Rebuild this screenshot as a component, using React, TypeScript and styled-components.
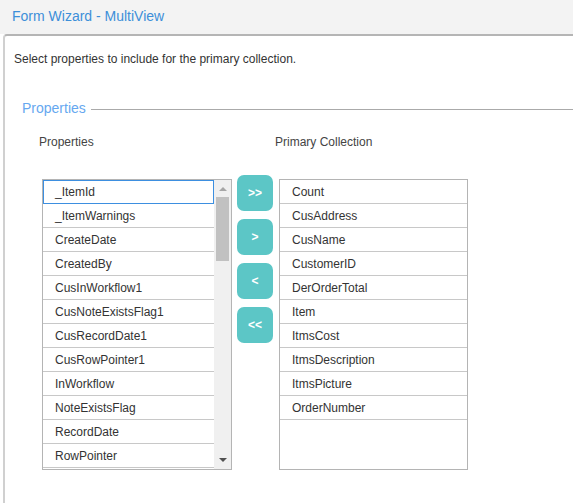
import React, { useState } from "react";
import styled, { createGlobalStyle } from "styled-components";

const GlobalStyle = createGlobalStyle`
  html, body {
    margin: 0;
    padding: 0;
    background: #ffffff;
    overflow: hidden;
  }
  body {
    font-family: "Liberation Sans", Arial, sans-serif;
    color: #333;
  }
`;

const sourceItems = [
  "_ItemId",
  "_ItemWarnings",
  "CreateDate",
  "CreatedBy",
  "CusInWorkflow1",
  "CusNoteExistsFlag1",
  "CusRecordDate1",
  "CusRowPointer1",
  "InWorkflow",
  "NoteExistsFlag",
  "RecordDate",
  "RowPointer",
  "UpdatedBy",
  "CoNum",
  "CoLine",
  "CoRelease",
  "CustNum",
  "CustSeq",
  "CusCity",
  "CusState",
  "CusZip",
  "CusCountry",
  "CusPhone",
  "CusEmail",
  "CusContact",
  "CusTerritory",
  "DerDueDate",
  "DerOrderDate",
  "DerShipDate",
  "DerStatus",
  "DueDate",
  "Item",
  "ItmsUM",
  "ItmsWeight",
  "ItmsProductCode",
  "OrderDate",
  "Price",
  "PromiseDate",
  "QtyOrdered",
  "QtyShipped",
  "QtyInvoiced",
  "ShipDate",
  "ShipCode",
  "Slsman",
  "Stat",
  "TaxCode1",
  "TaxCode2",
  "Whse",
  "Warehouse",
];

const targetItems = [
  "Count",
  "CusAddress",
  "CusName",
  "CustomerID",
  "DerOrderTotal",
  "Item",
  "ItmsCost",
  "ItmsDescription",
  "ItmsPicture",
  "OrderNumber",
];

const LIST_HEIGHT = 289;
const ROW_HEIGHT = 24;
const ARROW = 17;
const VISIBLE_ROWS = Math.floor(LIST_HEIGHT / ROW_HEIGHT);

function Arrow({ up, color }: { up: boolean; color: string }) {
  return (
    <svg width="8" height="5" viewBox="0 0 8 5">
      <path d={up ? "M0 5 L4 1 L8 5 Z" : "M0 0 L4 4 L8 0 Z"} fill={color} />
    </svg>
  );
}

function ScrollBar({ rows }: { rows: number }) {
  const track = LIST_HEIGHT - ARROW * 2;
  const thumb = Math.max(20, Math.round((LIST_HEIGHT / (rows * ROW_HEIGHT)) * track) + 1);
  return (
    <Bar>
      <ArrowBtn>
        <Arrow up color="#a6a6a6" />
      </ArrowBtn>
      <Track>
        <Thumb style={{ height: thumb }} />
      </Track>
      <ArrowBtn>
        <Arrow up={false} color="#505050" />
      </ArrowBtn>
    </Bar>
  );
}

export default function App() {
  const [selected, setSelected] = useState("_ItemId");

  // only the rows that fit in the box are drawn; the bar shows the rest
  const visible = sourceItems.slice(0, VISIBLE_ROWS);

  return (
    <>
      <GlobalStyle />
      <Header>
        <Title>Form Wizard - MultiView</Title>
      </Header>
      <Panel>
        <Intro>Select properties to include for the primary collection.</Intro>
        <Legend>
          <LegendText>Properties</LegendText>
          <LegendLine />
        </Legend>
        <Columns>
          <Column>
            <ColumnLabel>Properties</ColumnLabel>
            <ListBox $width={188} $indent={3}>
              <Rows>
                {visible.map((item) => (
                  <Row
                    key={item}
                    $focused={item === selected}
                    onClick={() => setSelected(item)}
                  >
                    {item}
                  </Row>
                ))}
              </Rows>
              <ScrollBar rows={sourceItems.length} />
            </ListBox>
          </Column>
          <Buttons>
            <MoveBtn>&gt;&gt;</MoveBtn>
            <MoveBtn>&gt;</MoveBtn>
            <MoveBtn>&lt;</MoveBtn>
            <MoveBtn>&lt;&lt;</MoveBtn>
          </Buttons>
          <Column $indent={2}>
            <ColumnLabel>Primary Collection</ColumnLabel>
            <ListBox $width={187} $indent={4}>
              <Rows>
                {targetItems.map((item) => (
                  <Row key={item} $focused={false}>
                    {item}
                  </Row>
                ))}
              </Rows>
            </ListBox>
          </Column>
        </Columns>
      </Panel>
    </>
  );
}

const Header = styled.div`
  background-color: #f3f3f3;
  height: 34px;
  padding-left: 12px;
  display: flex;
  align-items: center;
`;

const Title = styled.div`
  color: #3d8fd9;
  font-size: 14px;
  margin-top: -2px;
`;

const Panel = styled.div`
  margin-left: 3px;
  border-top: 2px solid #b5b5b5;
  border-left: 2px solid #d0d0d0;
  border-top-left-radius: 4px;
  height: 469px;
  padding-left: 9px;
`;

const Intro = styled.div`
  font-size: 12px;
  color: #333;
  margin-top: 16px;
`;

const Legend = styled.div`
  display: flex;
  align-items: center;
  margin-top: 34px;
  margin-left: 8px;
`;

const LegendText = styled.div`
  font-size: 14px;
  color: #66a8f0;
`;

const LegendLine = styled.div`
  flex: 1;
  height: 1px;
  background-color: #aaaaaa;
  margin-left: 5px;
  margin-top: 2px;
`;

const Columns = styled.div`
  display: flex;
  margin-top: 19px;
  margin-left: 25px;
`;

const Column = styled.div<{ $indent?: number }>`
  display: flex;
  flex-direction: column;
  padding-left: ${(p) => p.$indent ?? 0}px;
`;

const ColumnLabel = styled.div`
  font-size: 12px;
  color: #444;
  height: 14px;
  margin-bottom: 30px;
`;

const ListBox = styled.div<{ $width: number; $indent: number }>`
  display: flex;
  margin-left: ${(p) => p.$indent}px;
  width: ${(p) => p.$width}px;
  height: ${LIST_HEIGHT}px;
  border: 1px solid #b4b4b4;
  overflow: hidden;
`;

const Rows = styled.div`
  flex: 1;
  min-width: 0;
  overflow: hidden;
`;

const Row = styled.div<{ $focused: boolean }>`
  box-sizing: border-box;
  height: ${ROW_HEIGHT}px;
  font-size: 12px;
  color: #333;
  white-space: nowrap;
  cursor: default;
  padding-top: ${(p) => (p.$focused ? "1px" : "2px")};
  padding-left: ${(p) => (p.$focused ? "11px" : "12px")};
  line-height: 21px;
  border: ${(p) => (p.$focused ? "1px solid #3d8fe0" : "none")};
  border-bottom: 1px solid ${(p) => (p.$focused ? "#3d8fe0" : "#c8c8c8")};
`;

const Bar = styled.div`
  width: ${ARROW}px;
  flex-shrink: 0;
  display: flex;
  flex-direction: column;
  background-color: #f0f0f0;
`;

const ArrowBtn = styled.div`
  height: ${ARROW}px;
  display: flex;
  align-items: center;
  justify-content: center;
`;

const Track = styled.div`
  flex: 1;
  padding: 0 2px;
`;

const Thumb = styled.div`
  background-color: #c1c1c1;
`;

const Buttons = styled.div`
  display: flex;
  flex-direction: column;
  gap: 8px;
  margin-top: 40px;
  margin-left: 5px;
`;

const MoveBtn = styled.button`
  width: 36px;
  height: 36px;
  border: none;
  border-radius: 7px;
  background-color: #5cc6c6;
  color: #ffffff;
  font-family: "Liberation Sans", Arial, sans-serif;
  font-size: 12px;
  font-weight: bold;
  padding: 0;
  cursor: pointer;
`;
